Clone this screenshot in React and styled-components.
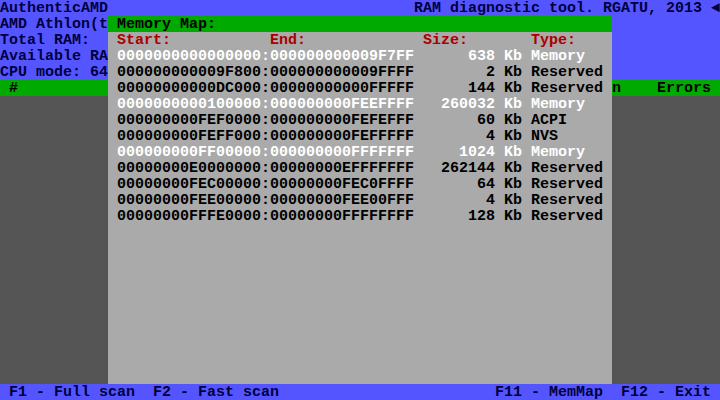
import styled, { createGlobalStyle } from "styled-components";

const BLUE = "#5555ff";
const INK = "#000040";
const GREEN = "#00aa00";
const GRAY = "#aaaaaa";
const DARK = "#555555";

const GlobalStyle = createGlobalStyle`
  html, body { margin: 0; padding: 0; background: ${DARK}; }
  * { box-sizing: border-box; }
`;

const regions = [
  ["0000000000000000", "000000000009F7FF", 638, "Memory"],
  ["000000000009F800", "000000000009FFFF", 2, "Reserved"],
  ["00000000000DC000", "00000000000FFFFF", 144, "Reserved"],
  ["0000000000100000", "000000000FEEFFFF", 260032, "Memory"],
  ["000000000FEF0000", "000000000FEFEFFF", 60, "ACPI"],
  ["000000000FEFF000", "000000000FEFFFFF", 4, "NVS"],
  ["000000000FF00000", "000000000FFFFFFF", 1024, "Memory"],
  ["00000000E0000000", "00000000EFFFFFFF", 262144, "Reserved"],
  ["00000000FEC00000", "00000000FEC0FFFF", 64, "Reserved"],
  ["00000000FEE00000", "00000000FEE00FFF", 4, "Reserved"],
  ["00000000FFFE0000", "00000000FFFFFFFF", 128, "Reserved"],
];

const cpuInfo = ["AMD Athlon(t", "Total RAM:", "Available RA", "CPU mode: 64"];

const App = () => {
  return (
    <Screen>
      <GlobalStyle />
      <Bar>
        <span>AuthenticAMD</span>
        <span>RAM diagnostic tool. RGATU, 2013 ◄</span>
      </Bar>
      <Body>
        <Side>
          <InfoBlock>
            {cpuInfo.map((t) => (
              <Line key={t}>{t}</Line>
            ))}
          </InfoBlock>
          <Strip>{" #"}</Strip>
          <Shade />
        </Side>
        <Window>
          <Title>{" Memory Map:"}</Title>
          <Line $color="#aa0000">
            {" Start:           End:             Size:       Type:"}
          </Line>
          {regions.map(([start, end, size, type]) => (
            <Line key={start} $color={type === "Memory" ? "#ffffff" : "#000000"}>
              {` ${start}:${end} ${String(size).padStart(8, " ")} Kb ${type}`}
            </Line>
          ))}
        </Window>
        <Side>
          <InfoBlock />
          <Strip>{"n    Errors"}</Strip>
          <Shade />
        </Side>
      </Body>
      <Bar>
        <span>{" F1 - Full scan  F2 - Fast scan"}</span>
        <span>{"F11 - MemMap  F12 - Exit "}</span>
      </Bar>
    </Screen>
  );
};

const Screen = styled.div`
  width: 720px;
  height: 400px;
  display: flex;
  flex-direction: column;
  font-family: "Liberation Mono", "DejaVu Sans Mono", monospace;
  font-weight: bold;
  font-size: 15px;
  line-height: 18px;
  white-space: pre;
  overflow: hidden;
`;

const Bar = styled.div`
  height: 16px;
  flex: none;
  display: flex;
  justify-content: space-between;
  background: ${BLUE};
  color: ${INK};
  overflow: hidden;
`;

const Body = styled.div`
  flex: 1;
  display: grid;
  grid-template-columns: 108px 504px 108px;
`;

const Side = styled.div`
  display: flex;
  flex-direction: column;
`;

const InfoBlock = styled.div`
  height: 64px;
  background: ${BLUE};
  color: ${INK};
`;

const Strip = styled.div`
  height: 16px;
  overflow: hidden;
  background: ${GREEN};
  color: #000000;
`;

const Shade = styled.div`
  flex: 1;
  background: ${DARK};
`;

const Window = styled.div`
  background: ${GRAY};
`;

const Title = styled.div`
  height: 16px;
  overflow: hidden;
  background: ${GREEN};
  color: #000000;
`;

const Line = styled.div`
  height: 16px;
  overflow: hidden;
  color: ${(p) => p.$color || "inherit"};
`;

export default App;
